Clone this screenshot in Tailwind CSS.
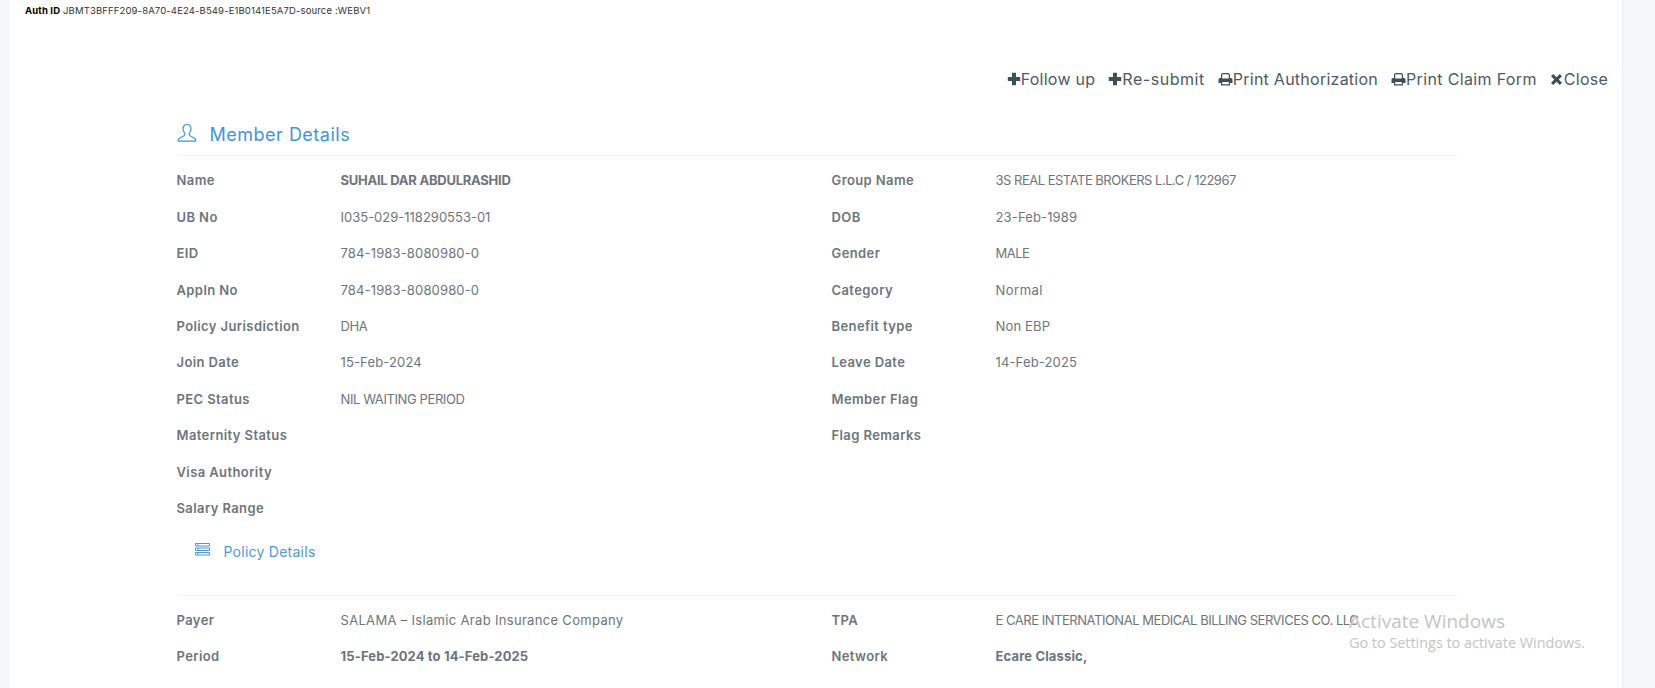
<!DOCTYPE html>
<html lang="en">
<head>
    <meta charset="UTF-8">
    <meta name="viewport" content="width=device-width, initial-scale=1.0">
    <title>Member Details</title>
    <script src="https://cdn.jsdelivr.net/npm/@tailwindcss/browser@4"></script>
</head>
<body class="h-[688px] overflow-hidden bg-[#f4f6fa] font-['Inter','Liberation_Sans',sans-serif] text-[#6c757d]">
    <div class="relative ml-[10px] w-[1613px] h-[688px] bg-white border-r border-[#eceef2] overflow-hidden">
        <!-- auth id line -->
        <p class="pl-[15px] pt-[4px] h-[20px] text-[9.5px] leading-[13px] tracking-[0.14px] text-[#333]"><b class="font-bold text-black">Auth ID</b> JBMT3BFFF209-8A70-4E24-B549-E1B0141E5A7D-source :WEBV1</p>

        <!-- actions -->
        <div class="flex justify-end items-center gap-[13px] h-[24px] mt-[47px] pr-[14px] text-[16px] tracking-[0.25px] text-[#4b5a63]">
            <a class="flex items-center"><svg class="w-[14px] h-[14px]" viewBox="0 0 14 14" fill="#3f4f58"><path d="M5 .8h4V5h4.2v4H9v4.2H5V9H.8V5H5z"/></svg>Follow up</a>
            <a class="flex items-center tracking-[0.55px]"><svg class="w-[14px] h-[14px]" viewBox="0 0 14 14" fill="#3f4f58"><path d="M5 .8h4V5h4.2v4H9v4.2H5V9H.8V5H5z"/></svg>Re-submit</a>
            <a class="flex items-center"><svg class="w-[15px] h-[14px]" viewBox="0 0 15 14" fill="#3f4f58"><path fill-rule="evenodd" d="M5 1h5.500L12 2.500V6h1a1.500 1.500 0 0 1 1.500 1.500V11H12v2.500H3V11H.5V7.500A1.500 1.500 0 0 1 2 6h1V3a2 2 0 0 1 2-2zm0 1.200A.8.800 0 0 0 4.200 3v3.500h6.600V3L10 2.200zM4.200 10v2.300h6.600V10z"/></svg>Print Authorization</a>
            <a class="flex items-center tracking-[0.35px]"><svg class="w-[15px] h-[14px]" viewBox="0 0 15 14" fill="#3f4f58"><path fill-rule="evenodd" d="M5 1h5.500L12 2.500V6h1a1.500 1.500 0 0 1 1.500 1.500V11H12v2.500H3V11H.5V7.500A1.500 1.500 0 0 1 2 6h1V3a2 2 0 0 1 2-2zm0 1.200A.8.800 0 0 0 4.200 3v3.500h6.600V3L10 2.200zM4.200 10v2.300h6.600V10z"/></svg>Print Claim Form</a>
            <a class="flex items-center"><svg class="w-[13px] h-[13px] mr-[1px]" viewBox="0 0 13 13" fill="#3f4f58"><path d="M3.200 1 6.500 4.300 9.800 1 12 3.200 8.700 6.500 12 9.800 9.800 12 6.500 8.700 3.200 12 1 9.800 4.300 6.500 1 3.200z"/></svg>Close</a>
        </div>

        <div class="ml-[166.500px] w-[1280px]">
            <!-- member details -->
            <div class="flex items-center h-[42px] mt-[23px] border-b border-[#f1f3f5] text-[18px] tracking-[0.5px] text-[#3f94e0]">
                <svg class="w-[20px] h-[20px] mr-[13px] mb-[3px]" viewBox="0 0 20 20" fill="none" stroke="#3f94e0" stroke-width="1.200"><path d="M10 1.500c-2.600 0-4 1.900-4 4.300 0 2 .9 3.500 1.800 4.500v1.500c0 .8-1 1.300-2.500 1.900-2.300.9-4 1.800-4 3.400v1h17.400v-1c0-1.600-1.700-2.500-4-3.400-1.500-.6-2.500-1.100-2.500-1.900v-1.500c.9-1 1.800-2.500 1.800-4.500 0-2.400-1.400-4.300-4-4.300z"/></svg>
                Member Details
            </div>
            <div class="grid grid-cols-[164px_491px_164px_461px] auto-rows-[36.4px] items-center mt-[7px] text-[13px] tracking-[0.15px]">
                <b class="font-semibold tracking-[0.4px]">Name</b><b class="font-bold tracking-[-0.25px]">SUHAIL DAR ABDULRASHID</b>
                <b class="font-semibold tracking-[0.4px]">Group Name</b><span class="tracking-[-0.5px]">3S REAL ESTATE BROKERS L.L.C / 122967</span>
                <b class="font-semibold tracking-[0.4px]">UB No</b><span class="tracking-[0px]">I035-029-118290553-01</span>
                <b class="font-semibold tracking-[0.4px]">DOB</b><span>23-Feb-1989</span>
                <b class="font-semibold tracking-[0.4px]">EID</b><span>784-1983-8080980-0</span>
                <b class="font-semibold tracking-[0.4px]">Gender</b><span class="tracking-[-0.5px]">MALE</span>
                <b class="font-semibold tracking-[0.4px]">Appln No</b><span>784-1983-8080980-0</span>
                <b class="font-semibold tracking-[0.4px]">Category</b><span class="tracking-[0.5px]">Normal</span>
                <b class="font-semibold tracking-[0.4px]">Policy Jurisdiction</b><span class="tracking-[-0.4px]">DHA</span>
                <b class="font-semibold tracking-[0.4px]">Benefit type</b><span>Non EBP</span>
                <b class="font-semibold tracking-[0.4px]">Join Date</b><span>15-Feb-2024</span>
                <b class="font-semibold tracking-[0.4px]">Leave Date</b><span>14-Feb-2025</span>
                <b class="font-semibold tracking-[0.4px]">PEC Status</b><span class="tracking-[-0.4px]">NIL WAITING PERIOD</span>
                <b class="font-semibold tracking-[0.4px]">Member Flag</b><span></span>
                <b class="font-semibold tracking-[0.4px]">Maternity Status</b><span></span>
                <b class="font-semibold tracking-[0.4px]">Flag Remarks</b><span></span>
                <b class="font-semibold tracking-[0.4px]">Visa Authority</b><span></span><span></span><span></span>
                <b class="font-semibold tracking-[0.4px]">Salary Range</b><span></span><span></span><span></span>
            </div>

            <!-- policy details -->
            <div class="flex items-center h-[24px] mt-[13px] ml-[18px] text-[14px] tracking-[0.25px] text-[#4f97df]">
                <svg class="w-[15px] h-[13px] mr-[14px] mb-[4px]" viewBox="0 0 15 13" fill="none" stroke="#4f97df"><path d="M.5.500h14v2.500H.5zM.5 5h14v2.500H.5zM.5 9.500h14V12H.5zM3 .5V3M3 5v2.500M3 9.500V12"/></svg>
                Policy Details
            </div>
            <div class="mt-[31px] border-t border-[#f1f3f5]"></div>
            <div class="grid grid-cols-[164px_491px_164px_461px] auto-rows-[36px] items-center mt-[7px] text-[13px]">
                <b class="font-semibold tracking-[0.4px]">Payer</b><span class="tracking-[0.32px]">SALAMA – Islamic Arab Insurance Company</span>
                <b class="font-semibold tracking-[0.4px]">TPA</b><span class="tracking-[-0.47px] whitespace-nowrap">E CARE INTERNATIONAL MEDICAL BILLING SERVICES CO. LLC</span>
                <b class="font-semibold tracking-[0.4px]">Period</b><b class="font-bold tracking-[0.13px]">15-Feb-2024 to 14-Feb-2025</b>
                <b class="font-semibold tracking-[0.4px]">Network</b><b class="font-bold tracking-[0.15px]">Ecare Classic,</b>
            </div>
        </div>

        <!-- windows watermark -->
        <div class="absolute left-[1339px] top-[608px] font-['Open_Sans',sans-serif] text-[#c4c4c4]">
            <p class="text-[19px] leading-[26px]">Activate Windows</p>
            <p class="text-[14.400px] leading-[20px] -mt-[1px]">Go to Settings to activate Windows.</p>
        </div>
    </div>
</body>
</html>
